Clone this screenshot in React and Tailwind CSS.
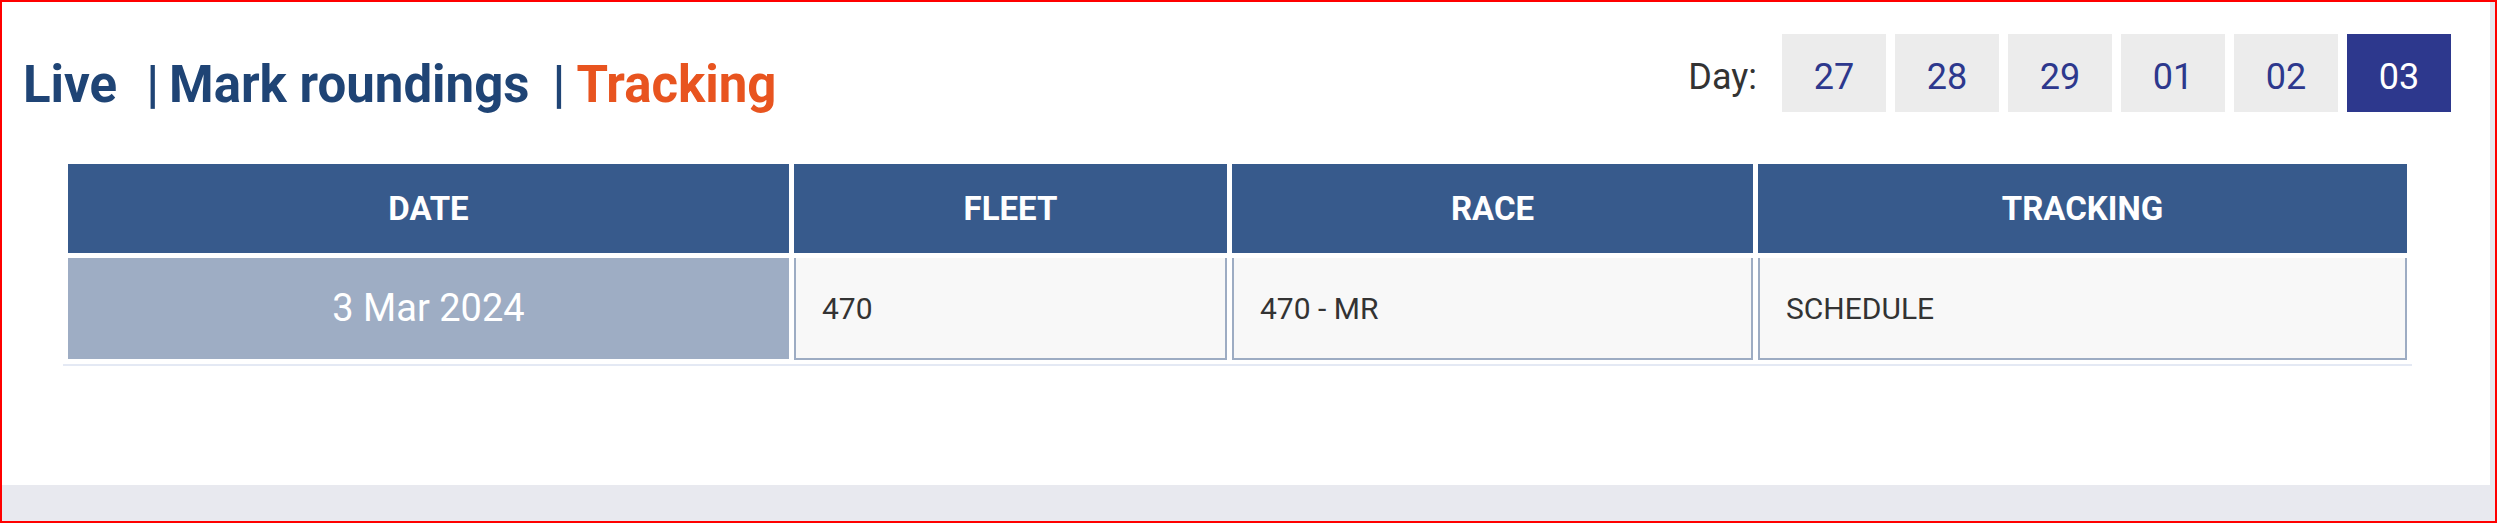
export default function App() {
  const days = ["27", "28", "29", "01", "02", "03"];
  return (
    <div
      className="h-[523px] w-[2497px] border-2 border-[#ff0000] bg-[#e8e9ef] flex flex-col"
      style={{ fontFamily: "Roboto, 'Noto Sans', sans-serif" }}
    >
      <div className="h-[483px] mr-[5px] bg-white flex flex-col">
        <div className="h-[110px] flex justify-between items-start">
          <h1 className="mt-[53px] ml-[21px] text-[51px] leading-[60px] font-bold whitespace-nowrap">
            <span className="text-[#1f4475]">Live</span>
            <span className="text-[#1f4475] ml-[29px] mr-[10px]">|</span>
            <span className="text-[#1f4475]">Mark roundings</span>
            <span className="text-[#1f4475] ml-[23px] mr-[11px]">|</span>
            <span className="text-[#e8541f]">Tracking</span>
          </h1>
          <div className="mt-[32px] mr-[39px] flex items-center">
            <span className="text-[36px] text-[#333333] mr-[25px] pt-[7px]">Day:</span>
            <div className="flex gap-[9px]">
              {days.map((d) => (
                <div
                  key={d}
                  className={
                    d === "03"
                      ? "w-[104px] h-[78px] pt-[7px] flex items-center justify-center text-[36px] bg-[#2d388d] text-white"
                      : "w-[104px] h-[78px] pt-[7px] flex items-center justify-center text-[36px] bg-[#ececec] text-[#2d388d]"
                  }
                >
                  {d}
                </div>
              ))}
            </div>
          </div>
        </div>
        <div className="mt-[47px] ml-[61px] w-[2349px] px-[5px] pt-[5px] pb-[4px] border-b-2 border-[#e4e9f4]">
          <div className="grid grid-cols-[721px_433px_521px_649px] gap-[5px]">
            {["DATE", "FLEET", "RACE", "TRACKING"].map((h) => (
              <div
                key={h}
                className="h-[89px] bg-[#375a8c] text-white font-bold text-[33px] flex items-center justify-center"
              >
                {h}
              </div>
            ))}
            <div className="h-[101px] bg-[#9eadc4] text-white text-[38px] flex items-center justify-center">
              3 Mar 2024
            </div>
            {["470", "470 - MR", "SCHEDULE"].map((t) => (
              <div
                key={t}
                className="h-[102px] bg-[#f8f8f8] border-l-2 border-r-2 border-b-2 border-[#9dacc3] text-[#333333] text-[30px] flex items-center pl-[26px]"
              >
                {t}
              </div>
            ))}
          </div>
        </div>
      </div>
    </div>
  );
}
